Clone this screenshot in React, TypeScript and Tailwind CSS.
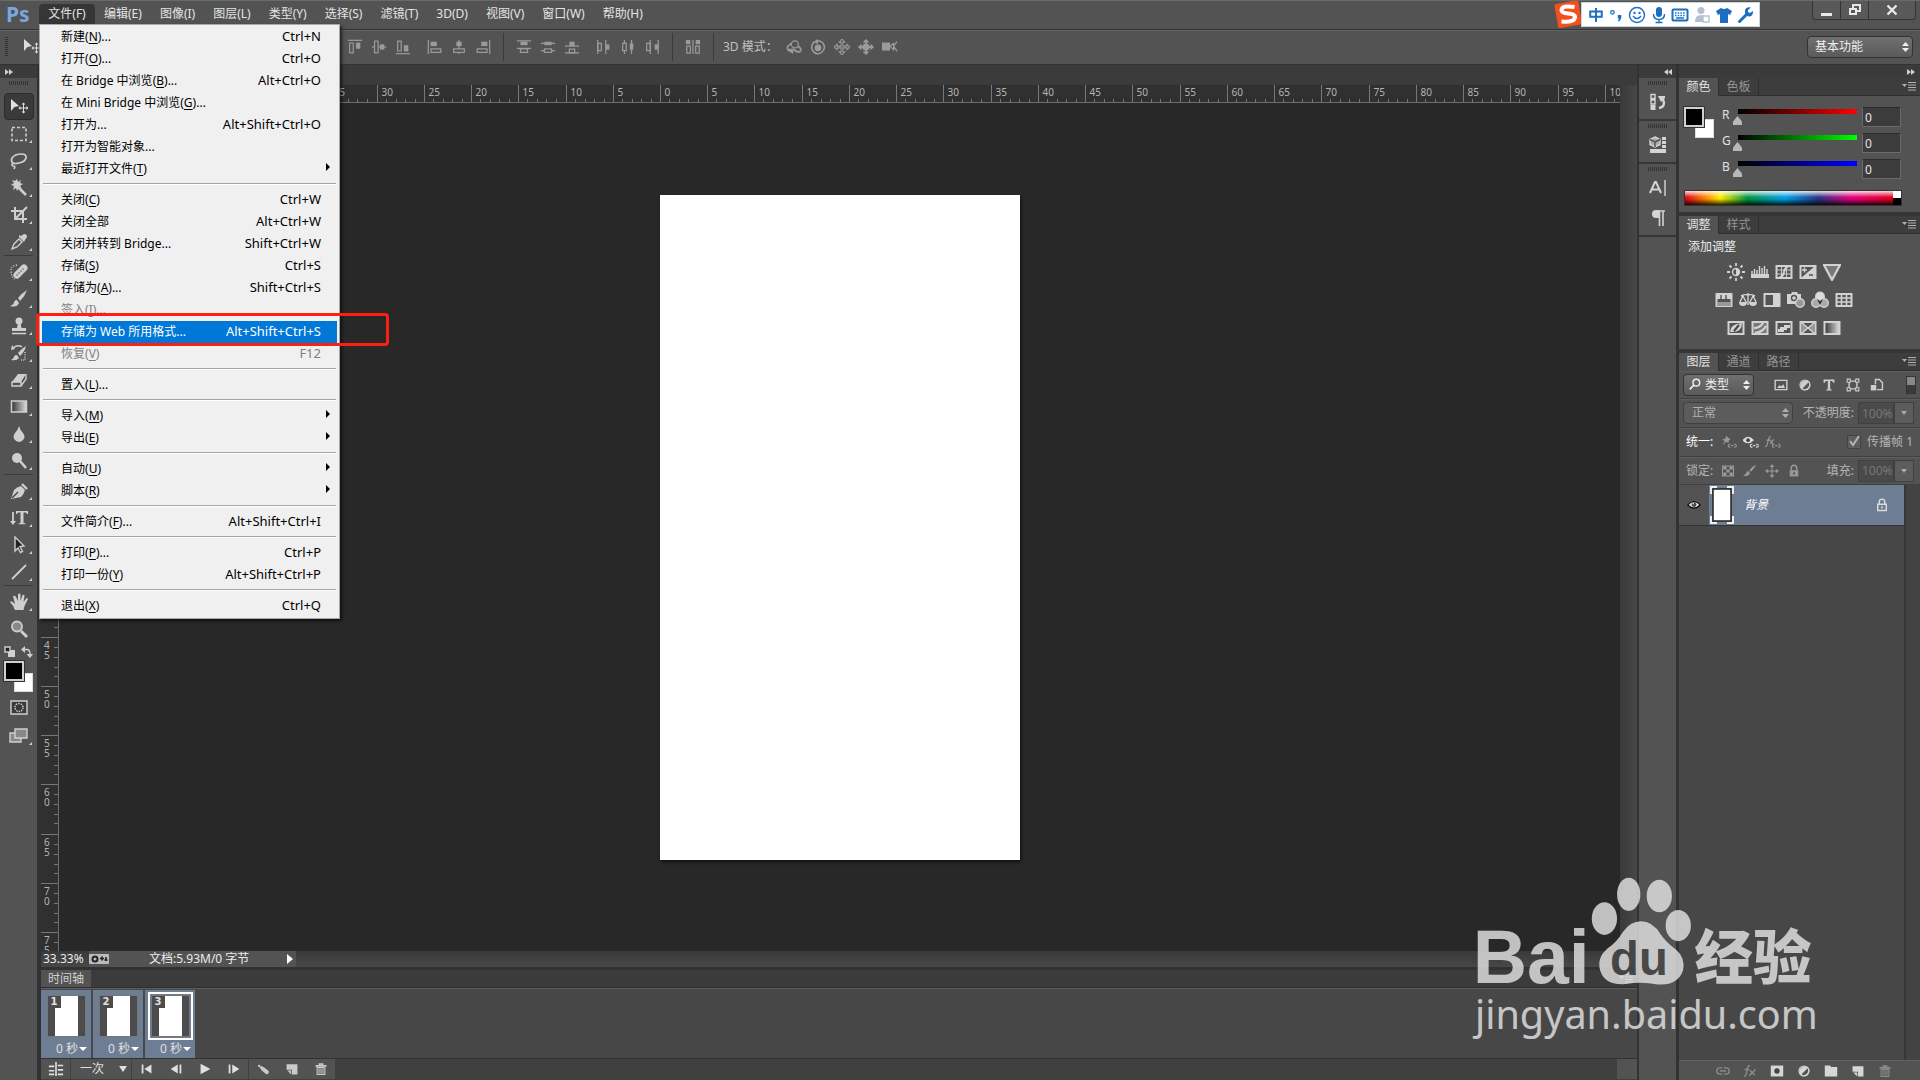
import type { ReactNode } from "react";

type MenuEntry = {
  text: string;
  mnemonic?: string;
  tail?: string;
  shortcut?: string;
  sub?: boolean;
  disabled?: boolean;
  active?: boolean;
};

const MENUS = ["编辑(E)", "图像(I)", "图层(L)", "类型(Y)", "选择(S)", "滤镜(T)", "3D(D)", "视图(V)", "窗口(W)", "帮助(H)"];

const FILE_MENU: MenuEntry[][] = [
  [
    { text: "新建", mnemonic: "N", tail: "...", shortcut: "Ctrl+N" },
    { text: "打开", mnemonic: "O", tail: "...", shortcut: "Ctrl+O" },
    { text: "在 Bridge 中浏览", mnemonic: "B", tail: "...", shortcut: "Alt+Ctrl+O" },
    { text: "在 Mini Bridge 中浏览", mnemonic: "G", tail: "..." },
    { text: "打开为...", shortcut: "Alt+Shift+Ctrl+O" },
    { text: "打开为智能对象..." },
    { text: "最近打开文件", mnemonic: "T", sub: true },
  ],
  [
    { text: "关闭", mnemonic: "C", shortcut: "Ctrl+W" },
    { text: "关闭全部", shortcut: "Alt+Ctrl+W" },
    { text: "关闭并转到 Bridge...", shortcut: "Shift+Ctrl+W" },
    { text: "存储", mnemonic: "S", shortcut: "Ctrl+S" },
    { text: "存储为", mnemonic: "A", tail: "...", shortcut: "Shift+Ctrl+S" },
    { text: "签入", mnemonic: "I", tail: "...", disabled: true },
    { text: "存储为 Web 所用格式...", shortcut: "Alt+Shift+Ctrl+S", active: true },
    { text: "恢复", mnemonic: "V", shortcut: "F12", disabled: true },
  ],
  [{ text: "置入", mnemonic: "L", tail: "..." }],
  [
    { text: "导入", mnemonic: "M", sub: true },
    { text: "导出", mnemonic: "E", sub: true },
  ],
  [
    { text: "自动", mnemonic: "U", sub: true },
    { text: "脚本", mnemonic: "R", sub: true },
  ],
  [{ text: "文件简介", mnemonic: "F", tail: "...", shortcut: "Alt+Shift+Ctrl+I" }],
  [
    { text: "打印", mnemonic: "P", tail: "...", shortcut: "Ctrl+P" },
    { text: "打印一份", mnemonic: "Y", shortcut: "Alt+Shift+Ctrl+P" },
  ],
  [{ text: "退出", mnemonic: "X", shortcut: "Ctrl+Q" }],
];

function Icon({ children, className = "size-[18px]", box = "0 0 18 18" }: { children: ReactNode; className?: string; box?: string }) {
  return (
    <svg viewBox={box} className={`shrink-0 ${className}`} fill="none" stroke="currentColor" strokeWidth="1.4" aria-hidden="true">
      {children}
    </svg>
  );
}

const fill = { fill: "currentColor", stroke: "none" };

/* ---------- menu bar ---------- */

function FileMenu() {
  return (
    <div role="menu" className="absolute top-5 left-0 z-20 w-[301px] border border-[#a8a8a8] bg-[#f0f0f0] py-px text-black shadow-[2px_2px_3px_rgba(0,0,0,0.6)]">
      {FILE_MENU.map((group, g) => (
        <div key={g}>
          {g > 0 && <div className="mx-[3px] mt-[3px] mb-1 h-[2px] border-t border-[#a5a5a5] bg-white" />}
          {group.map((item) => (
            <button
              key={item.text}
              type="button"
              role="menuitem"
              disabled={item.disabled}
              className={`flex h-[22px] w-full items-center px-[2px] text-xs ${
                item.active ? "text-white" : item.disabled ? "text-[#808080]" : ""
              }`}
            >
              <span className={`flex h-full w-full items-center justify-between pr-4 pl-[19px] ${item.active ? "bg-[#0078d7]" : ""}`}>
                <span>
                  {item.text}
                  {item.mnemonic && (
                    <>
                      (<u className="underline-offset-2">{item.mnemonic}</u>)
                    </>
                  )}
                  {item.tail}
                </span>
                {item.shortcut && <span className="text-[13px]">{item.shortcut}</span>}
                {item.sub && <span className="-mr-[9px] mb-1 border-y-4 border-l-4 border-y-transparent border-l-black" />}
              </span>
            </button>
          ))}
        </div>
      ))}
      <div className="pointer-events-none absolute top-[288px] -left-1 h-[33px] w-[353px] rounded border-3 border-[#fb2012]" />
    </div>
  );
}

function ImeBar() {
  return (
    <div className="absolute top-0 right-40 z-10 flex items-center text-[#1b6ec2]">
      <svg viewBox="0 0 28 28" className="-mr-px size-7" aria-hidden="true">
        <path d="M2 4 L22 0.5 Q24 0.5 24.5 2 L27.5 22 Q27.5 24 26 24.5 L6 28 Q4.500 28 4 26 L0.500 6 Q0.500 4.500 2 4Z" fill="#f4501e" />
        <path d="M20.500 7 Q8 5 7.500 10 Q7.500 13 14 13.500 Q21.500 14 21 17.500 Q20 22.500 7.500 21.500" fill="none" stroke="#fff" strokeWidth="4" />
      </svg>
      <div className="mt-px flex h-[25px] w-[179px] items-center justify-between border border-[#c9d7e2] bg-white pr-1 pl-1.5">
        <Icon className="size-4">
          <path d="M2.500 5h13v6h-13zM9 1v16" strokeWidth="2.200" />
        </Icon>
        <Icon className="size-4">
          <circle cx="5" cy="6" r="2" />
          <path d="M11 9h4v3l-2 4h-2l1.500-3H11z" {...fill} />
        </Icon>
        <Icon className="size-[18px]">
          <circle cx="9" cy="9" r="7.500" />
          <circle cx="6.500" cy="7" r="1.200" {...fill} />
          <circle cx="11.500" cy="7" r="1.200" {...fill} />
          <path d="M5 10q4 5 8 0" />
        </Icon>
        <Icon className="size-[18px]">
          <rect x="6" y="1" width="6" height="10" rx="3" {...fill} />
          <path d="M3.500 8q0 5.500 5.500 5.500T14.500 8M9 13v4M5.500 16.500h7" />
        </Icon>
        <Icon className="size-[18px]">
          <rect x="1.500" y="3.500" width="15" height="11" rx="1" strokeWidth="2" />
          <path d="M4 7h10M4 9.500h10" strokeDasharray="1.500 1.200" strokeWidth="1.500" />
          <path d="M5 12h8" strokeWidth="1.500" />
        </Icon>
        <Icon className="size-[18px] text-[#b4c0cf]">
          <circle cx="8" cy="4.500" r="3.500" {...fill} />
          <path d="M2 16q0-7 6-7t6 7z" {...fill} />
          <rect x="10" y="10" width="6" height="6" fill="#fff" />
        </Icon>
        <Icon className="size-[18px]">
          <path d="M6 2q3 2 6 0l5 3-2 4-2-1v9H5V8L3 9 1 5z" {...fill} />
        </Icon>
        <Icon className="size-[18px]">
          <path d="M2.500 15.500L10 8" strokeWidth="3" strokeLinecap="round" />
          <path d="M16 5l-3 2-2-1V4l3-2.500q-5-1-6 3-0.500 5 3.500 6 5 0 4.500-5.500z" {...fill} />
        </Icon>
      </div>
    </div>
  );
}

function MenuBar() {
  return (
    <header className="flex h-[30px] shrink-0 justify-between border-t border-b border-t-[#6a6a6a] border-b-[#333] bg-[#535353]">
      <div className="flex pt-[3px] text-xs text-[#e4e4e4]">
        <span className="w-[39px] pl-[6px] text-[21px] leading-5 font-bold text-[#79a8dc]">Ps</span>
        <div className="relative">
          <button type="button" aria-haspopup="menu" className="h-5 w-14 rounded-t-sm bg-[#363636] text-center">
            文件(F)
          </button>
          <FileMenu />
        </div>
        {MENUS.map((m) => (
          <button key={m} type="button" className="h-5 px-[9px]">
            {m}
          </button>
        ))}
      </div>
      <ImeBar />
      <div className="mr-1 flex h-[19px] divide-x divide-[#333] rounded-b border border-t-0 border-[#333] bg-[#595959] text-[#e8e8e8]">
        <button type="button" aria-label="最小化" className="flex w-7 items-center justify-center pt-2">
          <span className="h-[3px] w-[11px] bg-current" />
        </button>
        <button type="button" aria-label="还原" className="flex w-7 items-center justify-center">
          <Icon className="size-3.5" box="0 0 14 14">
            <path d="M5 5V2h7v6H9" strokeWidth="2" />
            <path d="M2 6h6v5H2z" strokeWidth="2" />
          </Icon>
        </button>
        <button type="button" aria-label="关闭" className="flex w-[46px] items-center justify-center">
          <Icon className="size-3" box="0 0 12 12">
            <path d="M1.500 1.500l9 9M10.500 1.500l-9 9" strokeWidth="2.400" />
          </Icon>
        </button>
      </div>
    </header>
  );
}

/* ---------- options bar ---------- */

const MOVE_ICON = (
  <>
    <path d="M1 1l8 7-4.500 1L1 13z" {...fill} />
    <path d="M13.500 5.500v9M9 10h9" strokeWidth="1" />
    <path d="M13.500 4.500l2 2h-4zM13.500 15.500l2-2h-4zM8.500 10l2-2v4zM18.500 10l-2-2v4z" {...fill} />
  </>
);

const ALIGN_ICONS: ReactNode[][] = [
  [
    <><path d="M1 1.500h16" /><path d="M3 4.500h4v11H3z" /><path d="M10 4h5v7h-5z" {...fill} /></>,
    <><path d="M1 9h16" /><path d="M4 2.500h4v13H4z" fill="#535353" /><path d="M10 6h5v6h-5z" {...fill} /></>,
    <><path d="M1 16.500h16" /><path d="M3 2.500h4v11H3z" /><path d="M10 7h5v7h-5z" {...fill} /></>,
  ],
  [
    <><path d="M1.500 1v16" /><path d="M4.500 11h11v4h-11z" /><path d="M4 3h7v5H4z" {...fill} /></>,
    <><path d="M9 1v16" /><path d="M3 11h12v4H3z" fill="#535353" /><path d="M6 3h6v5H6z" {...fill} /></>,
    <><path d="M16.500 1v16" /><path d="M2.500 11h11v4h-11z" /><path d="M7 3h7v5H7z" {...fill} /></>,
  ],
  [
    <><path d="M1 2h16M1 10.500h16" /><path d="M5 3h8v4H5z" {...fill} /><path d="M5 11h8v4H5z" /></>,
    <><path d="M1 5h16M1 13h16" /><path d="M5 3h8v4H5z" {...fill} /><path d="M5 11h8v4H5z" fill="#535353" /></>,
    <><path d="M1 8h16M1 15.500h16" /><path d="M6 3h6v5H6z" {...fill} /><path d="M6 11.500h6v4H6z" /></>,
  ],
  [
    <><path d="M2 1v16M11 1v16" /><path d="M2 5h4v8H2z" /><path d="M11 6h4v6h-4z" {...fill} /></>,
    <><path d="M5 1v16M13 1v16" /><path d="M3 5h4v8H3z" fill="#535353" /><path d="M11 5h4v7h-4z" {...fill} /></>,
    <><path d="M7 1v16M16 1v16" /><path d="M3 5h4v8H3z" /><path d="M12 6h4v6h-4z" {...fill} /></>,
  ],
  [
    <><path d="M2 8h4v8H2zM12 8h4v8h-4z" /><path d="M1 1h5v5H1zM12 1h5v5h-5z" {...fill} /><path d="M9 1v16" /></>,
  ],
];

const MODE_ICONS: ReactNode[] = [
  <><circle cx="10" cy="6" r="4" /><path d="M6 5Q-1 9 3 13l5 2M13 8q5 2 3 6-3 2-8-3" strokeWidth="2" /><path d="M2 11h6v6z" {...fill} /></>,
  <><circle cx="9" cy="10" r="3" fill="currentColor" /><path d="M5 3q-5 5-2 10 4 6 10 2 6-5 1-11-2-2-6-2" strokeWidth="1.800" /><path d="M9 0v6L4 3z" {...fill} /></>,
  <><path d="M9 0l3 3.500h-2V8h4.500V6L18 9l-3.500 3v-2H10v4.500h2L9 18l-3-3.500h2V10H3.500v2L0 9l3.500-3v2H8V3.500H6z" strokeWidth="1.200" /></>,
  <><path d="M9 1v16M1 9h16" strokeWidth="2" /><circle cx="9" cy="9" r="4" {...fill} /><path d="M9 0l4 4H5zM9 18l4-4H5zM0 9l4-4v8zM18 9l-4-4v8z" {...fill} /></>,
  <><path d="M0 4h9v9H0z" {...fill} /><path d="M9 8l4-3v7zM17 3l-4 5 4 6" /></>,
];

function Divider() {
  return <span className="mx-3 h-7 w-px bg-[#3a3a3a]" />;
}

function UpDown({ className = "" }: { className?: string }) {
  return (
    <svg viewBox="0 0 7 10" className={`pointer-events-none absolute h-2.5 w-[7px] ${className}`} fill="currentColor" aria-hidden="true">
      <path d="M3.500 0L7 4H0zM3.500 10L7 6H0z" />
    </svg>
  );
}

function OptionsBar() {
  return (
    <div className="flex h-[35px] shrink-0 items-center justify-between border-t border-b border-t-[#626262] border-b-[#333] bg-[#535353] pb-[2px] text-[#9a9a9a]">
      <div className="flex items-center">
        <span className="ml-[5px] h-5 w-[3px] bg-[repeating-linear-gradient(#333_0_1px,transparent_1px_2px)]" />
        <Icon className="ml-[15px] size-[18px] text-[#dcdcdc]">{MOVE_ICON}</Icon>
        <span className="w-[306px]" />
        {ALIGN_ICONS.map((group, g) => (
          <div key={g} className="flex items-center">
            <div className="flex gap-2">
              {group.map((icon, i) => (
                <button key={i} type="button" aria-label="对齐">
                  <Icon className="size-4">{icon}</Icon>
                </button>
              ))}
            </div>
            {g === 0 || g === 2 ? <span className="w-4" /> : <Divider />}
          </div>
        ))}
        <span className="-ml-[3px] w-[63px] text-xs whitespace-nowrap text-[#c0c0c0]">3D 模式：</span>
        <div className="flex gap-2">
          {MODE_ICONS.map((icon, i) => (
            <button key={i} type="button" aria-label="3D 模式">
              <Icon className="size-4">{icon}</Icon>
            </button>
          ))}
        </div>
      </div>
      <div className="relative mr-[7px] flex text-[#eee]">
        <select aria-label="工作区" className="h-[22px] w-[106px] appearance-none rounded-sm border border-[#333] bg-linear-to-b from-[#707070] to-[#5a5a5a] pl-[7px] text-xs">
          <option>基本功能</option>
        </select>
        <UpDown className="top-1.5 right-1" />
      </div>
    </div>
  );
}

/* ---------- tool box ---------- */

const TOOLS: { name: string; icon: ReactNode }[][] = [
  [
    { name: "移动", icon: MOVE_ICON },
    { name: "矩形选框", icon: <path d="M2 2.500h14v13H2z" strokeDasharray="3 2" strokeWidth="1.600" /> },
    { name: "套索", icon: <path d="M5 12Q0 10 2 6q3-4 9-4 6 0 5 4-1 4-7 5-4 1-6 0-2 2 0 3 3 0 1 3" strokeWidth="1.700" /> },
    { name: "魔棒", icon: <><path d="M7 0l1 3 3-2-1 3 3 1-3 2 2 3-3-1-2 3-1-3-3 2 1-4-3-1 3-2-2-3 3 1z" {...fill} /><path d="M9 9l7 7" strokeWidth="2.600" /></> },
    { name: "裁剪", icon: <path d="M5 1v12h12M1 5h12v12M6 12L17 1" strokeWidth="2" /> },
    { name: "吸管", icon: <><path d="M2 16l2-5 5-5 3 3-5 5z" /><path d="M9 4l5 5 1-2 2-3q0-3-3-3l-3 2-2-1z" {...fill} /></> },
  ],
  [
    { name: "修复画笔", icon: <><path d="M7 12L14 5" strokeWidth="7" strokeLinecap="round" /><path d="M7 12h.1M9 10h.1M11 8h.1M13 6h.1" stroke="#535353" strokeLinecap="round" /><path d="M7 2Q0 3 1 9t4 7" strokeDasharray="1 1.500" /></> },
    { name: "画笔", icon: <><path d="M17 0q-5 3-9 8l2 3q5-5 7-11z" {...fill} /><path d="M7 10q-3 0-3 3-1 2-4 3 7 2 9-3z" {...fill} /></> },
    { name: "仿制图章", icon: <><circle cx="9" cy="4" r="3.500" {...fill} /><path d="M8 6h2.500l1 5H16v3H2v-3h5z" {...fill} /><path d="M2 16.500h14" strokeWidth="1.600" /></> },
    { name: "历史记录画笔", icon: <><path d="M16 2q-5 3-8 7l2 3q5-5 6-10z" {...fill} /><path d="M7 11q-3 0-3 2-1 2-3 3 6 1 8-2z" {...fill} /><path d="M3 4q5-4 9-1" /><path d="M1 6l1-5 3 4z" {...fill} /><path d="M15 8v8h-4" strokeDasharray="1 1.200" /></> },
    { name: "橡皮擦", icon: <><path d="M8 3h8l-5 8H2z" {...fill} /><path d="M2 11h9v4H2zM11 15l5-7V3" /></> },
    { name: "渐变", icon: <><rect x="1.500" y="3" width="15" height="11" fill="url(#toolFade)" strokeWidth="1.500" /><defs><linearGradient id="toolFade"><stop stopColor="#333" /><stop offset="1" stopColor="#ddd" /></linearGradient></defs></> },
    { name: "模糊", icon: <path d="M9 1q1 4 4 7 3 4 0 7-4 4-8 0-3-3 0-7 3-3 4-7z" {...fill} /> },
    { name: "减淡", icon: <><circle cx="7" cy="6" r="5" {...fill} /><path d="M10 9l6 7" strokeWidth="2.600" /></> },
  ],
  [
    { name: "钢笔", icon: <><path d="M1 17l3-9q3-3 7-4l4 4q-1 4-4 7z" {...fill} /><path d="M12 2l5 5" strokeWidth="2.400" /><path d="M2 16l6-6" stroke="#444" /></> },
    { name: "直排文字", icon: <><path d="M3 3v12" strokeWidth="1.800" /><path d="M0 12h6l-3 4z" {...fill} /><path d="M6 2h12v3h-1l-1-1.500h-2.500V14l2 .5v.8H8.500v-.8l2-.5V3.500H8L7 5H6z" {...fill} /></> },
    { name: "路径选择", icon: <path d="M5 1l9 9-4 .5 2.500 5-2 1L8 12l-3 3z" fill="#222" /> },
    { name: "直线", icon: <path d="M2 16L16 2" strokeWidth="1.800" /> },
  ],
  [
    { name: "抓手", icon: <path d="M5 17Q3 12 0 9q1-2 5 2L3 3q2-1 3 1l2 4V1q2-1 2.500 0V8l2-6q2-1 2 1l-1 6 3-4q2 0 1 2l-3 6-1 4z" {...fill} /> },
    { name: "缩放", icon: <><circle cx="7" cy="6.500" r="5" fill="#888" strokeWidth="1.800" /><path d="M11 11l6 6" strokeWidth="2.800" /></> },
  ],
];

function Grip() {
  return <div className="mx-auto h-1 w-5 bg-[repeating-linear-gradient(90deg,#333_0_1px,transparent_1px_2px)]" />;
}

function Chevrons({ left = false }: { left?: boolean }) {
  return (
    <svg viewBox="0 0 8 6" className={`h-1.5 w-2 ${left ? "-scale-x-100" : ""}`} fill="#cfcfcf" aria-hidden="true">
      <path d="M0 0l4 3-4 3zM4 0l4 3-4 3z" />
    </svg>
  );
}

function ToolBox() {
  return (
    <nav className="flex w-[39px] shrink-0 flex-col border-r-2 border-[#323232] bg-[#535353] text-[#cfcfcf]">
      <div className="flex h-[13px] shrink-0 items-center bg-[#3b3b3b] pl-[5px]">
        <Chevrons />
      </div>
      <div className="pt-[3px] pb-2">
        <Grip />
      </div>
      {TOOLS.map((group, g) => (
        <div key={g} className={g > 0 ? "mx-1 border-t border-[#3a3a3a] pt-[2px]" : "mx-1"}>
          {group.map((tool, i) => (
            <button
              key={tool.name}
              type="button"
              aria-label={tool.name}
              className={`relative flex h-[27px] w-[30px] items-center justify-center ${
                g === 0 && i === 0 ? "rounded-sm border border-[#2c2c2c] bg-[#3a3a3a] text-[#e0e0e0]" : ""
              }`}
            >
              <Icon>{tool.icon}</Icon>
              {!(g === 0 && i === 0) && tool.name !== "缩放" && (
                <svg viewBox="0 0 3 3" className="absolute right-[2px] bottom-1 size-[3px]" fill="currentColor" aria-hidden="true">
                  <path d="M3 0v3H0z" />
                </svg>
              )}
            </button>
          ))}
        </div>
      ))}
      <div className="flex h-[19px] items-center justify-between px-1">
        <Icon className="size-3" box="0 0 12 12">
          <path d="M4 4h7v7H4z" {...fill} />
          <path d="M1 1h5v5H1z" fill="#222" />
        </Icon>
        <Icon className="size-3" box="0 0 12 12">
          <path d="M2 3.500h4q3 0 3 5" />
          <path d="M4 0v7L0 3.500zM5.500 8H12l-3 4z" {...fill} />
        </Icon>
      </div>
      <Swatches className="ml-1 h-[31px] w-[29px]" />
      <button type="button" aria-label="快速蒙版" className="mt-2 flex h-[17px] justify-center">
        <Icon className="h-[15px] w-[18px]" box="0 0 18 15">
          <path d="M1 1h16v13H1z" fill="#3a3a3a" />
          <circle cx="9" cy="7.500" r="4" strokeDasharray="1.500 1" />
        </Icon>
      </button>
      <button type="button" aria-label="屏幕模式" className="relative mt-[11px] flex h-[17px] justify-center">
        <Icon className="h-4 w-[19px]" box="0 0 19 16">
          <path d="M1 5h11v9H1z" fill="#888" />
          <path d="M6 1h12v9H6z" fill="#888" />
        </Icon>
        <svg viewBox="0 0 3 3" className="absolute right-[5px] bottom-0 size-[3px]" fill="currentColor" aria-hidden="true">
          <path d="M3 0v3H0z" />
        </svg>
      </button>
    </nav>
  );
}

function Swatches({ className }: { className: string }) {
  return (
    <div className={`relative shrink-0 ${className}`}>
      <button type="button" aria-label="背景色" className="absolute right-0 bottom-0 size-[19px] border border-[#ddd] bg-white" />
      <button type="button" aria-label="前景色" className="absolute top-0 left-0 size-5 border-2 border-[#cfcfcf] bg-black ring-1 ring-[#333]" />
    </div>
  );
}

/* ---------- document ---------- */

// pixels per five ruler units
const X_STEP = 47.24;
const Y_STEP = 49.2;

function HorizontalRuler() {
  const majors = Array.from({ length: 33 }, (_, i) => i - 12);
  return (
    <div className="flex h-[18px] shrink-0 justify-center overflow-hidden border-b border-[#6e6e6e] bg-[#303030]">
      <svg className="h-[18px] w-[360px] shrink-0 overflow-visible text-[10px]" aria-hidden="true">
        {majors.map((m) => {
          const x = Math.round(m * X_STEP) + 0.5;
          return (
            <g key={m} stroke="#777">
              <path d={`M${x} 0v18`} />
              {[1, 2, 3, 4].map((k) => (
                <path key={k} d={`M${x + Math.round((k * X_STEP) / 5)} 14v4`} />
              ))}
              <text x={x + 4} y="11" fill="#b4b4b4" stroke="none">
                {Math.abs(m * 5)}
              </text>
            </g>
          );
        })}
      </svg>
    </div>
  );
}

function VerticalRuler() {
  const majors = Array.from({ length: 17 }, (_, i) => i - 1);
  return (
    <div className="flex w-[18px] shrink-0 items-center overflow-hidden border-r border-[#6e6e6e] bg-[#303030]">
      <svg className="h-[665px] w-[17px] shrink-0 overflow-visible text-[10px]" aria-hidden="true">
        {majors.map((m) => {
          const y = Math.round(m * Y_STEP) - 0.5;
          return (
            <g key={m} stroke="#777">
              <path d={`M0 ${y}h17`} />
              {[1, 2, 3, 4].map((k) => (
                <path key={k} d={`M13 ${y + Math.round((k * Y_STEP) / 5)}h4`} />
              ))}
              {String(Math.abs(m * 5)).split("").map((d, k) => (
                <text key={k} x="3" y={y + 11 + k * 10} fill="#b4b4b4" stroke="none">
                  {d}
                </text>
              ))}
            </g>
          );
        })}
      </svg>
    </div>
  );
}

function DocumentView() {
  return (
    <main className="flex min-h-0 flex-1 flex-col">
      <div className="h-5 shrink-0 bg-[#3b3b3b]" />
      <div className="flex min-h-0 flex-1">
        <div className="flex min-w-0 flex-1 flex-col">
          <div className="flex">
            <div className="h-[18px] w-[18px] shrink-0 bg-[#303030]" />
            <div className="min-w-0 flex-1">
              <HorizontalRuler />
            </div>
          </div>
          <div className="flex min-h-0 flex-1">
            <VerticalRuler />
            <div className="flex flex-1 items-center justify-center bg-[#282828]">
              <div className="h-[665px] w-[360px] bg-white shadow-[1px_2px_3px_#111]" />
            </div>
          </div>
        </div>
        <div className="w-[17px] bg-linear-to-r from-[#3a3a3a] to-[#474747]" />
      </div>
      <div className="flex h-4 shrink-0 items-center bg-linear-to-b from-[#3a3a3a] to-[#474747] text-xs text-[#ececec]">
        <span className="w-12 pl-[2px]">33.33%</span>
        <div className="flex h-4 w-[207px] items-center bg-[#535353]">
          <Icon className="h-3 w-5" box="0 0 20 12">
            <rect y="1" width="20" height="10" rx="1" fill="#bbb" stroke="none" />
            <circle cx="6" cy="6" r="2.500" stroke="#222" strokeWidth="2" />
            <path d="M11 5.500h4M13 3.500v4M17 4v4M15.500 7h3" stroke="#222" strokeWidth="1.600" />
          </Icon>
          <span className="flex-1 pl-10">文档:5.93M/0 字节</span>
          <button type="button" aria-label="状态选项" className="mr-[3px] border-y-5 border-l-6 border-y-transparent border-l-white" />
        </div>
      </div>
    </main>
  );
}

/* ---------- timeline ---------- */

function PanelMenuIcon({ className = "" }: { className?: string }) {
  return (
    <Icon className={`h-[9px] w-3.5 text-[#b0b0b0] ${className}`} box="0 0 14 9">
      <path d="M0 2h5L2.500 5z" {...fill} />
      <path d="M6 .5h8M6 3h8M6 5.500h8M6 8h8" strokeWidth="1" />
    </Icon>
  );
}

const FRAME_NAV: { label: string; icon: ReactNode }[] = [
  { label: "第一帧", icon: <><path d="M4 4v10" strokeWidth="2" /><path d="M14 4v10L6 9z" {...fill} /></> },
  { label: "上一帧", icon: <><path d="M14 4v10" strokeWidth="2" /><path d="M11 4v10L3 9z" {...fill} /></> },
  { label: "播放", icon: <path d="M4 3v12l11-6z" {...fill} /> },
  { label: "下一帧", icon: <><path d="M4 4v10" strokeWidth="2" /><path d="M7 4v10l8-5z" {...fill} /></> },
];

const NEW_ICON = (
  <>
    <path d="M2 3h14v13H9v-6H2z" {...fill} />
    <path d="M3 11l5 5v-5z" {...fill} />
  </>
);
const TRASH_ICON = (
  <>
    <path d="M2 5h14M7 5V2.500h4V5" strokeWidth="2" />
    <path d="M4 7h10v9H4z" />
    <path d="M6.500 8v7M9 8v7M11.500 8v7" />
  </>
);

const FRAME_EDIT: { label: string; icon: ReactNode }[] = [
  { label: "过渡动画", icon: <><circle cx="4" cy="5" r="1.500" {...fill} /><circle cx="7" cy="7" r="2" {...fill} /><path d="M9 9l5 4" strokeWidth="5" strokeLinecap="round" /></> },
  { label: "复制帧", icon: NEW_ICON },
  { label: "删除帧", icon: TRASH_ICON },
];

function Timeline() {
  return (
    <section className="flex h-[113px] shrink-0 flex-col border-t-3 border-[#323232] bg-[#474747] text-xs text-[#e0e0e0]">
      <div className="flex h-[18px] items-center justify-between border-b border-[#2e2e2e] bg-[#3b3b3b]">
        <button type="button" className="h-full w-[50px] bg-[#535353] text-[#d0d0d0]">
          时间轴
        </button>
        <PanelMenuIcon className="mr-1" />
      </div>
      <div className="flex flex-1 gap-[2px] border-t border-[#5e5e5e] pt-px">
        {[1, 2, 3].map((n) => (
          <div key={n} className="flex w-[50px] flex-col items-center bg-[#6d7d93] pt-[2px]">
            <div className={`border-2 p-px ${n === 3 ? "border-white" : "border-transparent"}`}>
              <div className="relative flex h-[42px] w-[39px] justify-center border border-[#777] bg-[#4c4c4c]">
                <div className="h-full w-[23px] bg-white" />
                <span className="absolute top-0 left-0 h-3 w-[13px] bg-[#4c4c4c] text-center font-['DejaVu_Sans',sans-serif] text-[10px] leading-3 font-bold">
                  {n}
                </span>
              </div>
            </div>
            <button type="button" className="flex h-[18px] items-center gap-px self-end pr-1">
              0 秒
              <span className="border-x-4 border-t-4 border-x-transparent border-t-white" />
            </button>
          </div>
        ))}
      </div>
      <div className="flex h-[22px] shrink-0 items-stretch gap-px border-t border-[#323232] bg-[#404040] pb-px">
        <button type="button" aria-label="转换为视频时间轴" className="flex w-[29px] items-center justify-center bg-[#535353]">
          <Icon className="size-4">
            <path d="M9 1v16M11 5h6M11 10h6M11 15h6M1 6h6M1 11h6M1 15h6" strokeWidth="1.800" />
          </Icon>
        </button>
        <button type="button" className="flex w-[60px] items-center justify-between bg-[#535353] pr-1 pl-[9px]">
          一次
          <span className="border-x-4 border-t-6 border-x-transparent border-t-current" />
        </button>
        <div className="flex w-[116px] items-center justify-around bg-[#535353]">
          {FRAME_NAV.map((b) => (
            <button key={b.label} type="button" aria-label={b.label}>
              <Icon className="size-4">{b.icon}</Icon>
            </button>
          ))}
        </div>
        <div className="flex w-[86px] items-center justify-around bg-[#535353] text-[#cacaca]">
          {FRAME_EDIT.map((b) => (
            <button key={b.label} type="button" aria-label={b.label}>
              <Icon className="size-3.5">{b.icon}</Icon>
            </button>
          ))}
        </div>
        <span className="ml-auto w-5 bg-[#535353]" />
      </div>
    </section>
  );
}

/* ---------- icon dock ---------- */

const DOCK: { label: string; icon: ReactNode }[][] = [
  [{ label: "历史记录", icon: <><path d="M2 1.500h4v4H2zM2 7h4v4H2z" /><path d="M1.500 12h5v5h-5z" {...fill} /><path d="M10 15q7-1 4-9" strokeWidth="2.400" /><path d="M9 3h7v2l-4 4z" {...fill} /></> }],
  [{ label: "属性", icon: <><path d="M6 1l5 2.500v5L6 11 1 8.500v-5z" fill="#aaa" /><path d="M1 3.500L6 6l5-2.500M6 6v5" stroke="#535353" /><path d="M13 1h4v3h-4zM13 5h4v3h-4zM13 9h4v3h-4zM1 13h16v4H1z" {...fill} /></> }],
  [
    { label: "字符", icon: <><path d="M1 14L6 3h1l5 11M3 10.500h7" strokeWidth="2" /><path d="M16 1v16" /></> },
    { label: "段落", icon: <><path d="M9 2h7M10.500 2v15M14 2v15" strokeWidth="1.600" /><path d="M10 1v8H7Q3 9 3 5t4-4z" {...fill} /></> },
  ],
];

function Dock() {
  return (
    <aside className="flex w-[42px] shrink-0 flex-col border-r-3 border-l-2 border-[#323232] bg-[#535353] text-[#d4d4d4]">
      <div className="flex h-[13px] shrink-0 items-center justify-end bg-[#3b3b3b] pr-1">
        <Chevrons left />
      </div>
      {DOCK.map((group, g) => (
        <div key={g} className="border-b-2 border-[#363636] pt-[3px]">
          <Grip />
          {group.map((b) => (
            <button key={b.label} type="button" aria-label={b.label} className="mx-auto flex h-[30px] items-center pt-1 last:mb-1">
              <Icon>{b.icon}</Icon>
            </button>
          ))}
        </div>
      ))}
    </aside>
  );
}

/* ---------- right panels ---------- */

function Tabs({ names }: { names: string[] }) {
  return (
    <div className="flex h-[18px] shrink-0 items-stretch bg-[#3d3d3d] text-xs">
      {names.map((name, i) => (
        <button
          key={name}
          type="button"
          className={`w-10 border-r border-[#303030] ${i === 0 ? "bg-[#535353] text-[#e2e2e2]" : "border-b border-b-[#303030] text-[#949494]"}`}
        >
          {name}
        </button>
      ))}
      <span className="flex flex-1 items-center justify-end border-b border-[#303030] pr-1">
        <PanelMenuIcon />
      </span>
    </div>
  );
}

const CHANNELS = [
  { name: "R", track: "bg-[linear-gradient(90deg,#000,#f00)]" },
  { name: "G", track: "bg-[linear-gradient(90deg,#000,#0f0)]" },
  { name: "B", track: "bg-[linear-gradient(90deg,#000,#00f)]" },
];

function ColorPanel() {
  return (
    <section className="border-b-4 border-[#363636] bg-[#535353]">
      <Tabs names={["颜色", "色板"]} />
      <div className="flex px-[5px] pt-[11px]">
        <Swatches className="h-[31px] w-[30px]" />
        <div className="ml-2 flex flex-1 flex-col gap-1.5">
          {CHANNELS.map((c) => (
            <div key={c.name} className="flex h-5 items-center">
              <label htmlFor={`ch-${c.name}`} className="mb-1 w-[11px] text-xs text-[#e0e0e0]">
                {c.name}
              </label>
              <input
                id={`ch-${c.name}`}
                type="range"
                min={0}
                max={255}
                defaultValue={0}
                className={`h-4 min-w-0 flex-1 appearance-none bg-[length:calc(100%-10px)_5px] bg-[position:5px_0] bg-no-repeat [&::-webkit-slider-runnable-track]:h-4 [&::-webkit-slider-thumb]:mt-[7px] [&::-webkit-slider-thumb]:size-[9px] [&::-webkit-slider-thumb]:appearance-none [&::-webkit-slider-thumb]:bg-[#b8b8b8] [&::-webkit-slider-thumb]:[clip-path:polygon(50%_0,100%_60%,100%_100%,0_100%,0_60%)] ${c.track}`}
              />
              <input
                aria-label={`${c.name} 值`}
                defaultValue="0"
                className="mr-5 h-5 w-[39px] border border-[#6a6a6a] border-t-[#2c2c2c] bg-[#3c3c3c] pl-[2px] text-xs text-[#e6e6e6]"
              />
            </div>
          ))}
        </div>
        <span className="w-[5px]" />
      </div>
      <div className="mx-[5px] mt-[11px] mb-1.5 flex h-4 w-[218px] border border-[#333]">
        <div className="flex-1 bg-[linear-gradient(rgba(255,255,255,0.85),transparent_45%,transparent_55%,rgba(0,0,0,0.85)),linear-gradient(90deg,#e2001a,#f80_10%,#ffed00_17%,#009640_30%,#00a0e9_48%,#283583_64%,#e6007e_80%,#e2001a)]" />
        <div className="w-2 bg-linear-to-b from-white from-50% to-black to-50%" />
      </div>
    </section>
  );
}

const box = <path d="M1.500 3h15v12h-15z" strokeWidth="2" />;

const ADJUSTMENTS: ReactNode[][] = [
  [
    <><circle cx="9" cy="9" r="3.500" /><path d="M9 5.500a3.500 3.500 0 0 1 0 7z" {...fill} /><path d="M9 0v3M9 15v3M0 9h3M15 9h3M2.500 2.500l2 2M13.500 13.500l2 2M2.500 15.500l2-2M13.500 4.500l2-2" strokeWidth="1.800" /></>,
    <><path d="M0 15h18v-4H0z" {...fill} /><path d="M1 12V8M3.500 12V6M6 12V7M8.500 12V3M11 12V5M13.500 12V3M16 12V6" strokeWidth="1.400" /></>,
    <>{box}<path d="M6.500 3v12M11.500 3v12M2 7h14M2 11h14" strokeWidth=".9" /><path d="M2 15q6 0 7-6t7-6" strokeWidth="2" /></>,
    <>{box}<path d="M2 15L16 3v12z" {...fill} /><path d="M3 7h5M5.500 4.500v5" /><path d="M10 12h4" stroke="#444" /></>,
    <path d="M1 2h16L9 17z" fill="#777" strokeWidth="2.200" />,
  ],
  [
    <>{box}<path d="M2 3h14v5H2z" {...fill} /><path d="M6 4v4M11 4v4" stroke="#555" /><path d="M2 11h14v4H2z" fill="#999" stroke="none" /></>,
    <><path d="M9 2v12M2 5q4-2 7-1 3-1 7 1M1 11l3-6 3 6M11 11l3-6 3 6" /><path d="M0 11h8q0 4-4 4t-4-4zM10 11h8q0 4-4 4t-4-4z" {...fill} /></>,
    <>{box}<path d="M10 3h6v12h-6z" {...fill} /></>,
    <><path d="M0 3h4l1-2h5l1 2h3v5L9 13H0z" {...fill} /><circle cx="7" cy="7" r="2.500" stroke="#535353" /><circle cx="13" cy="12" r="4.300" fill="#999" /></>,
    <><circle cx="9" cy="5.500" r="4.300" fill="#ddd" /><circle cx="5" cy="12" r="4.300" fill="#aaa" /><circle cx="13" cy="12" r="4.300" fill="#aaa" /><path d="M6 8l3 2 3-2-3 6z" fill="#333" stroke="none" /></>,
    <>{box}<path d="M6.500 3v12M11.500 3v12M2 7h14M2 11h14" strokeWidth="1.600" /></>,
  ],
  [
    <>{box}<path d="M3 13Q3 5 15 4q0 10-12 9z" {...fill} /><path d="M7 12l5-6" stroke="#444" strokeWidth="2" /></>,
    <><path d="M1.500 3h15v12h-15z" fill="#777" strokeWidth="2" /><path d="M3 9q6 0 9-5M4 14q8-1 11-7" strokeWidth="2.400" /></>,
    <>{box}<path d="M3 10h2V8h4V6h6v3h-3v2H9v2H3z" {...fill} /></>,
    <>{box}<path d="M2 3l7 6-7 6zM16 3L9 9l7 6z" fill="#999" stroke="none" /><path d="M2 3l14 12M16 3L2 15" /></>,
    <rect x="1.500" y="3" width="15" height="12" fill="url(#toolFade)" strokeWidth="2" />,
  ],
];

function AdjustmentsPanel() {
  return (
    <section className="border-b-4 border-[#363636] bg-[#535353]">
      <Tabs names={["调整", "样式"]} />
      <p className="px-[9px] pt-[3px] text-xs leading-5 text-[#ececec]">添加调整</p>
      <div className="flex flex-col gap-2.5 pt-1.5 pr-8 pb-3 text-[#d2d2d2]">
        {ADJUSTMENTS.map((row, r) => (
          <div key={r} className="flex justify-center gap-1.5">
            {row.map((icon, i) => (
              <button key={i} type="button" aria-label="调整图层">
                <Icon>{icon}</Icon>
              </button>
            ))}
          </div>
        ))}
      </div>
    </section>
  );
}

const FILTERS: ReactNode[] = [
  <><path d="M1.500 3h15v12h-15z" strokeWidth="1.800" /><path d="M4 13l3-4 2 2 3-3 2 5z" {...fill} /></>,
  <><circle cx="9" cy="9" r="6.500" /><path d="M4.500 13.500L13.500 4.500Q17 9 13 13t-8.500.5z" fill="#535353" /><path d="M13.500 4.500L4.500 13.500Q1 9 5 5t8.500-.5z" {...fill} /></>,
  <path d="M2 2h14v4h-1.500L13 4h-2.500v10l2 1v1h-7v-1l2-1V4H5L3.500 6H2z" {...fill} />,
  <><path d="M4 4h10v10H4z" strokeWidth="1.800" /><path d="M1.500 1.500h4v4h-4zM12.500 1.500h4v4h-4zM1.500 12.500h4v4h-4zM12.500 12.500h4v4h-4z" fill="#535353" /></>,
  <><path d="M7 8V2h5l4 4v9H9" strokeWidth="1.800" /><path d="M1 9h7v7H1z" {...fill} /></>,
];

// small chain in the lower right corner of the unify icons
const LINK = <path d="M14 13.500h3M13 11.500h-1q-2 0-2 2t2 2h1M18 11.500h1q2 0 2 2t-2 2h-1" strokeWidth="1.500" />;
const BRUSH = <><path d="M17 1q-5 2-9 7l2 2q5-4 7-9z" {...fill} /><path d="M7 9q-3 0-3 3-1 2-4 3 7 2 9-3z" {...fill} /></>;
const EYE = <><path d="M1 9q8-9 16 0-8 8-16 0z" fill="#ddd" /><circle cx="9" cy="8.500" r="3" fill="#444" stroke="none" /><circle cx="8" cy="7.500" r="1" fill="#fff" stroke="none" /></>;
const LOCK = <><path d="M3.500 8h11v8h-11z" {...fill} /><path d="M5.500 8V5q0-3.500 3.500-3.500T12.500 5v3" strokeWidth="2" /><path d="M9 10.500v3" stroke="#444" strokeWidth="1.800" /></>;
const FX = <><path d="M1 16q3 0 4-7t4-7M2 7h6" strokeWidth="1.800" /><path d="M9 8l6 6M16 7l-8 8" strokeWidth="1.800" /></>;

const UNIFY: ReactNode[] = [
  <><path d="M7 0l6 5-2 1-1 4-3-2-5 5 3-6-3-2 4-1z" {...fill} />{LINK}</>,
  <g color="#ddd"><path d="M0 6q7-8 14 0-7 7-14 0z" fill="#ddd" /><circle cx="7" cy="6" r="2.600" fill="#444" stroke="none" /><g stroke="#ddd">{LINK}</g></g>,
  <><path d="M0 15q3 0 4-7t4-7M2 6h6M7 6l4 5M12 5l-5 6" strokeWidth="1.600" />{LINK}</>,
];

const LOCKS: ReactNode[] = [
  <><path d="M2 2.500h14v13H2z" /><path d="M3 3h4v4H3zM11 3h4v4h-4zM7 7h4v4H7zM3 11h4v4H3zM11 11h4v4h-4z" {...fill} /></>,
  BRUSH,
  <><path d="M9 2v14M2 9h14" /><path d="M9 0l3 4H6zM9 18l3-4H6zM0 9l4-3v6zM18 9l-4-3v6z" {...fill} /></>,
  LOCK,
];

const LAYER_ACTIONS: { label: string; icon: ReactNode; dim?: boolean }[] = [
  { label: "链接图层", dim: true, icon: <><path d="M8 5H5Q1 5 1 9t4 4h3M10 5h3q4 0 4 4t-4 4h-3M5 9h8" strokeWidth="1.800" /></> },
  { label: "图层样式", dim: true, icon: FX },
  { label: "图层蒙版", icon: <><path d="M1 2h16v14H1z" {...fill} /><circle cx="9" cy="9" r="3.500" fill="#444" stroke="none" /></> },
  { label: "调整图层", icon: FILTERS[1] },
  { label: "新建组", icon: <path d="M1 2h7l1 2h8v12H1z" {...fill} /> },
  { label: "新建图层", icon: NEW_ICON },
  { label: "删除图层", dim: true, icon: TRASH_ICON },
];

function PercentField({ label }: { label: string }) {
  return (
    <div className="ml-auto flex items-center text-xs">
      <label className="flex items-center gap-1 text-[#b5b5b5]">
        {label}
        <input
          defaultValue="100%"
          disabled
          className="h-[22px] w-9 border border-[#404040] bg-[#4a4a4a] pl-[3px] text-[#777]"
        />
      </label>
      <button type="button" aria-label={`${label}滑块`} className="mr-1.5 flex h-[22px] w-5 items-center justify-center border border-[#404040] bg-[#5c5c5c]">
        <span className="border-x-3 border-t-4 border-x-transparent border-t-[#aaa]" />
      </button>
    </div>
  );
}

const rowClass = "flex shrink-0 items-center border-b border-[#404040] bg-[#535353] text-xs shadow-[inset_0_1px_#5e5e5e]";

function LayersPanel() {
  return (
    <section className="flex min-h-0 flex-1 flex-col bg-[#474747]">
      <Tabs names={["图层", "通道", "路径"]} />
      <div className={`h-7 ${rowClass}`}>
        <div className="relative ml-1 flex text-[#eee]">
          <Icon className="pointer-events-none absolute top-1 left-1.5 size-3">
            <circle cx="11" cy="7" r="5" strokeWidth="2.200" />
            <path d="M7 11l-6 6" strokeWidth="2.600" />
          </Icon>
          <select aria-label="过滤类型" className="h-[22px] w-[71px] appearance-none rounded-sm border border-[#333] bg-linear-to-b from-[#707070] to-[#5a5a5a] pl-[21px]">
            <option>类型</option>
          </select>
          <UpDown className="top-1.5 right-1" />
        </div>
        <div className="ml-5 flex gap-2.5 text-[#cecece]">
          {FILTERS.map((icon, i) => (
            <button key={i} type="button" aria-label="过滤">
              <Icon className="size-3.5">{icon}</Icon>
            </button>
          ))}
        </div>
        <button type="button" aria-label="过滤开关" className="mr-1 ml-auto h-[18px] w-2.5 border border-[#333] bg-linear-to-b from-[#888] from-50% to-[#3a3a3a] to-50%" />
      </div>
      <div className={`h-[29px] ${rowClass}`}>
        <div className="relative ml-1 flex text-[#b0b0b0]">
          <select aria-label="混合模式" disabled className="h-[22px] w-[110px] appearance-none rounded-sm border border-[#404040] bg-[#5c5c5c] pl-2">
            <option>正常</option>
          </select>
          <UpDown className="top-1.5 right-1" />
        </div>
        <PercentField label="不透明度:" />
      </div>
      <div className={`h-[29px] ${rowClass}`}>
        <span className="ml-[7px] text-white">统一:</span>
        <div className="ml-2 flex gap-1.5 text-[#999]">
          {UNIFY.map((icon, i) => (
            <button key={i} type="button" aria-label="统一选项">
              <Icon className="h-3.5 w-4" box="0 0 22 17">
                {icon}
              </Icon>
            </button>
          ))}
        </div>
        <label className="mr-[7px] ml-auto flex items-center gap-1.5 text-[#b5b5b5]">
          <span className="relative flex">
            <input type="checkbox" defaultChecked disabled className="size-3.5 appearance-none border border-[#444] bg-[#5e5e5e]" />
            <Icon className="pointer-events-none absolute size-3.5" box="0 0 14 14">
              <path d="M3 6l3 4 6-9" strokeWidth="2" />
            </Icon>
          </span>
          <span>传播帧 1</span>
        </label>
      </div>
      <div className={`h-7 ${rowClass}`}>
        <span className="ml-[7px] text-[#b5b5b5]">锁定:</span>
        <div className="ml-2 flex gap-2 text-[#999]">
          {LOCKS.map((icon, i) => (
            <button key={i} type="button" aria-label="锁定选项">
              <Icon className="size-3.5">{icon}</Icon>
            </button>
          ))}
        </div>
        <PercentField label="填充:" />
      </div>
      <div className="flex min-h-0 flex-1">
        <div className="flex-1">
          <div className="flex h-[41px] border-b border-[#333] bg-[#6d7d93]">
            <button type="button" aria-label="显示图层" className="flex w-[30px] items-center justify-center bg-[#535353]">
              <Icon className="size-3.5">{EYE}</Icon>
            </button>
            <Icon className="ml-px h-10 w-6 text-[#eee]" box="0 0 24 40">
              <path d="M1 9V2h6M17 2h6v7M23 31v7h-6M7 38H1v-7" strokeWidth="2" />
              <path d="M3 4h18v32H3z" fill="#fff" stroke="#222" strokeWidth="1.500" />
            </Icon>
            <span className="ml-2.5 self-center text-xs text-white italic">背景</span>
            <Icon className="mr-[15px] ml-auto size-3.5 self-center text-[#ddd]">
              <path d="M3.500 8h11v8h-11zM5.500 8V5q0-3.500 3.500-3.500T12.500 5v3M9 10.500v3" strokeWidth="1.800" />
            </Icon>
          </div>
        </div>
        <div className="w-4 border-l-2 border-[#363636] bg-[#434343]" />
      </div>
      <div className="flex h-5 shrink-0 items-center justify-end gap-[13px] border-t border-[#606060] bg-[#535353] pr-7">
        {LAYER_ACTIONS.map((a) => (
          <button key={a.label} type="button" aria-label={a.label} className={a.dim ? "text-[#8c8c8c]" : "text-[#d6d6d6]"}>
            <Icon className="size-3.5">{a.icon}</Icon>
          </button>
        ))}
      </div>
    </section>
  );
}

/* ---------- watermark ---------- */

function Watermark() {
  return (
    <svg
      viewBox="0 0 1080 520"
      className="pointer-events-none absolute right-[94px] bottom-9 z-10 h-[173px] w-[360px] opacity-80"
      fill="#e6e6e6"
      aria-hidden="true"
    >
      <text x="19" y="337" fontFamily="Liberation Sans, sans-serif" fontWeight="700" fontSize="226">
        Bai
      </text>
      <ellipse cx="415" cy="143" rx="38" ry="49" />
      <ellipse cx="488" cy="70" rx="35" ry="50" />
      <ellipse cx="580" cy="75" rx="38" ry="49" />
      <ellipse cx="637" cy="164" rx="38" ry="47" />
      <path d="M525 151Q560 151 584 190 600 214 630 236 660 262 651 300 634 346 575 341 525 332 480 340 410 345 400 290 394 258 425 232 452 214 470 184 492 151 525 151Z" />
      <text x="432" y="314" fontFamily="Liberation Sans, sans-serif" fontWeight="700" fontSize="142" fill="#474747">
        du
      </text>
      <text x="686" y="324" fontFamily="Noto Sans CJK SC, sans-serif" fontWeight="900" fontSize="176">
        经验
      </text>
      <text x="26" y="476" fontFamily="Noto Sans, sans-serif" fontSize="119">
        jingyan.baidu.com
      </text>
    </svg>
  );
}

export default function App() {
  return (
    <div className="relative flex h-screen flex-col overflow-hidden bg-[#323232] font-['Noto_Sans','Noto_Sans_CJK_SC',sans-serif] select-none">
      <MenuBar />
      <OptionsBar />
      <div className="flex min-h-0 flex-1">
        <ToolBox />
        <div className="flex min-w-0 flex-1 flex-col pl-[2px]">
          <DocumentView />
          <Timeline />
        </div>
        <Dock />
        <div className="flex w-[241px] shrink-0 flex-col">
          <div className="flex h-[13px] shrink-0 items-center justify-end bg-[#3b3b3b] pr-[5px]">
            <Chevrons />
          </div>
          <ColorPanel />
          <AdjustmentsPanel />
          <LayersPanel />
        </div>
      </div>
      <Watermark />
    </div>
  );
}
